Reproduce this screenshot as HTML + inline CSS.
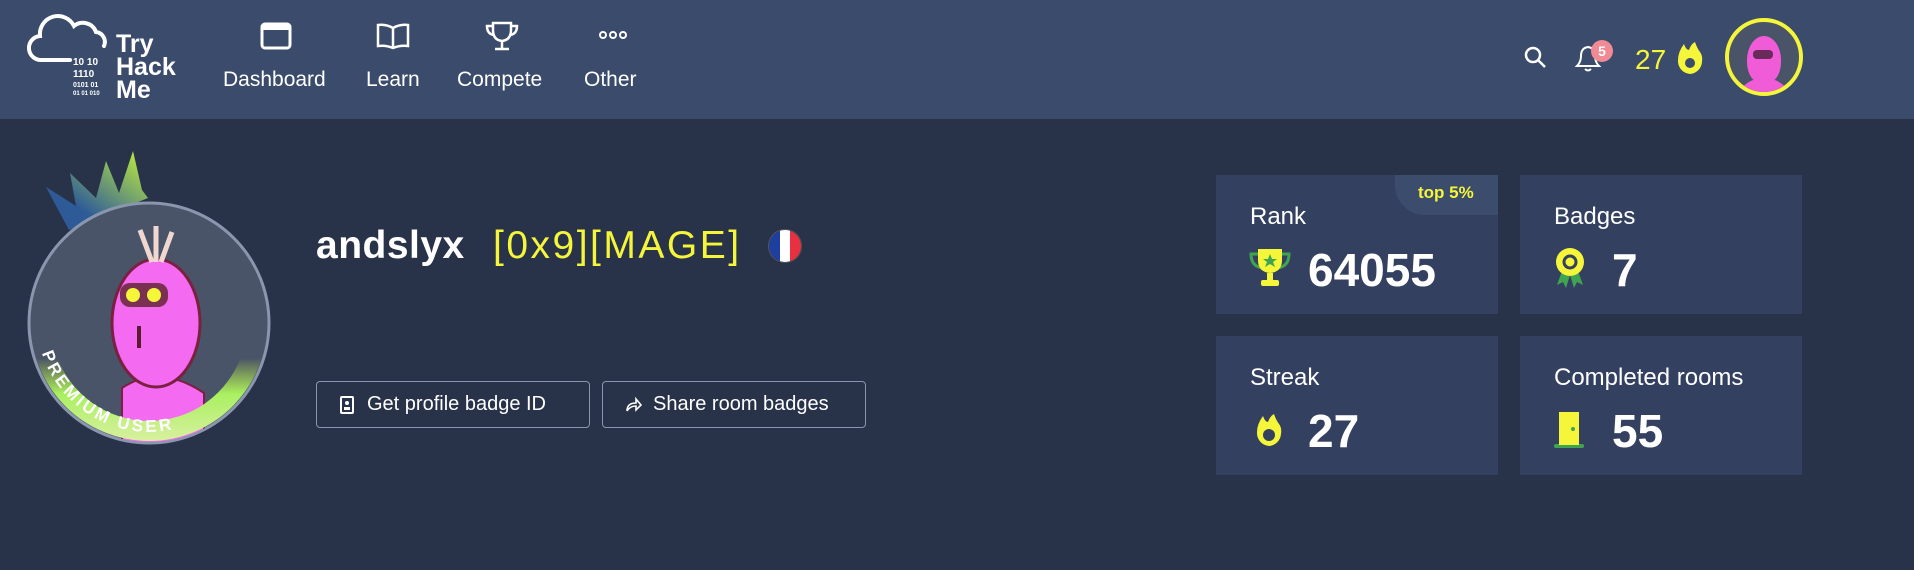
<!DOCTYPE html>
<html><head><meta charset="utf-8"><style>
*{margin:0;padding:0;box-sizing:border-box}
body{width:1914px;height:570px;background:#283349;font-family:"Liberation Sans",sans-serif;color:#fff;position:relative;overflow:hidden}
.hdr{position:absolute;left:0;top:0;width:1914px;height:119px;background:#3a4b6b}
.a{position:absolute}
.nav{position:absolute;top:68px;font-size:21px;color:#fff}
.card{position:absolute;width:282px;height:139px;background:#334060}
.card .t{position:absolute;left:34px;top:28px;font-size:24px}
.card .v{position:absolute;left:92px;top:68px;font-size:46px;font-weight:bold}
.btn{position:absolute;top:381px;height:47px;border:1.5px solid #8a96ad;border-radius:4px;font-size:20px;line-height:44px;padding-left:50px}
</style></head><body>
<div class="hdr"></div>
<!-- logo -->
<svg class="a" style="left:26px;top:12px" width="90" height="90" viewBox="0 0 90 90">
<path d="M44 48 H16 A12 12 0 0 1 14 24 A18 18 0 0 1 48 14 A14 14 0 0 1 70 20 A10 10 0 0 1 78 34" fill="none" stroke="#fff" stroke-width="4" stroke-linecap="round"/>
<text x="47" y="53" font-size="10" font-weight="bold" fill="#fff" font-family="Liberation Sans">10  10</text>
<text x="47" y="65" font-size="10" font-weight="bold" fill="#fff" font-family="Liberation Sans">1110</text>
<text x="47" y="75" font-size="7" font-weight="bold" fill="#fff" font-family="Liberation Sans">0101  01</text>
<text x="47" y="83" font-size="6" font-weight="bold" fill="#fff" font-family="Liberation Sans">01   01 010</text>
</svg>
<div class="a" style="left:116px;top:33px;font-size:25px;font-weight:bold;line-height:23px">Try<br>Hack<br>Me</div>
<!-- nav icons -->
<svg class="a" style="left:260px;top:22px" width="32" height="28"><rect x="2" y="2" width="28" height="24" rx="3" fill="none" stroke="#fff" stroke-width="3"/><rect x="2" y="2" width="28" height="6" fill="#fff"/></svg>
<svg class="a" style="left:376px;top:22px" width="34" height="28"><path d="M17 6 Q10 2 2 3 V24 Q10 23 17 26 Q24 23 32 24 V3 Q24 2 17 6 V26" fill="none" stroke="#fff" stroke-width="2.5"/></svg>
<svg class="a" style="left:485px;top:20px" width="34" height="32"><path d="M8 3 H26 V10 Q26 20 17 21 Q8 20 8 10 Z M8 6 H2 Q2 14 9 15 M26 6 H32 Q32 14 25 15 M17 21 V28 M10 29 H24" fill="none" stroke="#fff" stroke-width="2.5"/></svg>
<svg class="a" style="left:599px;top:30px" width="28" height="10"><circle cx="4" cy="5" r="3" fill="none" stroke="#fff" stroke-width="2"/><circle cx="14" cy="5" r="3" fill="none" stroke="#fff" stroke-width="2"/><circle cx="24" cy="5" r="3" fill="none" stroke="#fff" stroke-width="2"/></svg>
<div class="nav" style="left:223px">Dashboard</div>
<div class="nav" style="left:366px">Learn</div>
<div class="nav" style="left:457px">Compete</div>
<div class="nav" style="left:584px">Other</div>
<!-- right header -->
<svg class="a" style="left:1523px;top:45px" width="24" height="24"><circle cx="10" cy="10" r="7" fill="none" stroke="#fff" stroke-width="2.5"/><path d="M15 15 L22 22" stroke="#fff" stroke-width="2.5"/></svg>
<svg class="a" style="left:1573px;top:42px" width="30" height="32"><path d="M4 24 Q8 20 8 14 Q8 6 15 5 Q22 6 22 14 Q22 20 26 24 Z M12 27 Q15 30 18 27" fill="none" stroke="#fff" stroke-width="2"/></svg>
<div class="a" style="left:1591px;top:40px;width:22px;height:22px;border-radius:50%;background:#f08a94;font-size:14px;font-weight:bold;text-align:center;line-height:22px">5</div>
<div class="a" style="left:1635px;top:44px;font-size:28px;color:#f5f53a">27</div>
<svg class="a" style="left:1675px;top:40px" width="30" height="36" viewBox="0 0 30 36"><path d="M15 34 A13 13 0 0 1 3 20 Q3 12 9 4 Q11 10 14 10 Q16 4 20 2 Q22 8 25 12 Q28 16 27 22 A13 13 0 0 1 15 34 Z" fill="#f5f53a"/><circle cx="15" cy="23" r="5" fill="#3a4b6b"/></svg>
<div class="a" style="left:1725px;top:18px;width:78px;height:78px;border-radius:50%;border:4px solid #f5f53a;background:#4a5468;overflow:hidden">
<div class="a" style="left:18px;top:14px;width:34px;height:48px;border-radius:50% 50% 45% 45%;background:#f05cd8"></div>
<div class="a" style="left:5px;top:56px;width:60px;height:30px;border-radius:30px 30px 0 0;background:#f05cd8"></div>
<div class="a" style="left:24px;top:28px;width:20px;height:9px;border-radius:4px;background:#6a2a5a"></div>
</div>
<!-- profile avatar -->
<svg class="a" style="left:24px;top:148px" width="260" height="300" viewBox="0 0 260 300">
<defs><linearGradient id="g" x1="0" y1="1" x2="1" y2="0"><stop offset="0.3" stop-color="#2e5b98"/><stop offset="1" stop-color="#c6f53a"/></linearGradient>
<linearGradient id="r" x1="0" y1="0" x2="0" y2="1"><stop offset="0.3" stop-color="#c6f53a" stop-opacity="0"/><stop offset="0.6" stop-color="#a9f060"/><stop offset="1" stop-color="#d8f0a0"/></linearGradient>
<clipPath id="cc"><circle cx="125" cy="175" r="119"/></clipPath></defs>
<polygon points="45,82 22,39 52,58 46,25 72,50 82,13 95,45 109,3 118,42 124,50" fill="url(#g)"/>
<circle cx="125" cy="175" r="120" fill="#4a5468" stroke="#8a96ad" stroke-width="3"/>
<g clip-path="url(#cc)">
<path d="M98 240 Q135 215 180 245 L180 300 L98 300 Z" fill="#f46af0" stroke="#7a2040" stroke-width="2"/>
<ellipse cx="132" cy="175" rx="44" ry="64" fill="#f46af0" stroke="#7a2040" stroke-width="3"/>
<rect x="96" y="135" width="48" height="24" rx="10" fill="#7a3050"/>
<circle cx="109" cy="147" r="7" fill="#f5f53a"/><circle cx="130" cy="147" r="7" fill="#f5f53a"/>
<rect x="113" y="178" width="4" height="22" fill="#5a1a30"/>
<path d="M128 114 L116 82 M132 114 L132 78 M137 114 L148 84" stroke="#f0d8d0" stroke-width="5"/>
</g>
<path d="M7 175 A118 118 0 0 0 243 175 L223 175 A98 98 0 0 1 27 175 Z" fill="url(#r)"/>
<text font-size="17" font-weight="bold" fill="#fff" letter-spacing="3" font-family="Liberation Sans"><textPath href="#arc">PREMIUM USER</textPath></text>
<path id="arc" d="M18 205 A112 112 0 0 0 200 255" fill="none"/>
</svg>
<!-- name -->
<div class="a" style="left:316px;top:224px;font-size:39px;font-weight:bold;letter-spacing:0.5px">andslyx</div>
<div class="a" style="left:493px;top:224px;font-size:39px;color:#f5f53a;letter-spacing:2.5px">[0x9][MAGE]</div>
<div class="a" style="left:768px;top:229px;width:34px;height:34px;border-radius:50%;overflow:hidden;display:flex;border:1px solid #555">
<div style="flex:1;background:#1f3fa0"></div><div style="flex:1;background:#fff"></div><div style="flex:1;background:#e83040"></div></div>
<!-- buttons -->
<div class="btn" style="left:316px;width:274px">Get profile badge ID</div>
<svg class="a" style="left:340px;top:396px" width="14" height="18"><rect x="1" y="1" width="12" height="16" rx="1" fill="none" stroke="#fff" stroke-width="2"/><circle cx="7" cy="7" r="2" fill="#fff"/><rect x="4" y="11" width="6" height="3" fill="#fff"/></svg>
<div class="btn" style="left:602px;width:264px;padding-left:50px">Share room badges</div>
<svg class="a" style="left:624px;top:396px" width="18" height="18"><path d="M3 15 Q3 7 12 7 V3 L17 9 L12 14 V10 Q6 10 3 15" fill="none" stroke="#fff" stroke-width="1.6"/></svg>
<!-- cards -->
<div class="card" style="left:1216px;top:175px">
<div class="a" style="left:179px;top:0;width:103px;height:40px;background:#3b4c6d;border-bottom-left-radius:30px"></div>
<div class="a" style="left:202px;top:8px;font-size:17px;font-weight:bold;color:#f5f53a">top 5%</div>
<div class="t">Rank</div><div class="v">64055</div>
<svg class="a" style="left:32px;top:73px" width="44" height="40" viewBox="0 0 44 40"><path d="M10 6 H3 Q3 18 14 20 M34 6 H41 Q41 18 30 20" fill="none" stroke="#3fa452" stroke-width="3"/><path d="M10 1 H34 V12 Q34 24 22 25 Q10 24 10 12 Z" fill="#f5f53a"/><rect x="19" y="25" width="6" height="8" fill="#f5f53a"/><rect x="13" y="32" width="18" height="6" rx="2" fill="#f5f53a"/><path d="M22 6 L24 11 L29 11 L25 14 L27 19 L22 16 L17 19 L19 14 L15 11 L20 11 Z" fill="#3fa452"/></svg>
</div>
<div class="card" style="left:1520px;top:175px"><div class="t">Badges</div><div class="v" style="left:92px">7</div>
<svg class="a" style="left:34px;top:72px" width="32" height="42" viewBox="0 0 32 42"><path d="M8 24 L3 38 L9 35 L12 41 L16 28 L20 41 L23 35 L29 38 L24 24 Z" fill="#3fa452"/><circle cx="16" cy="15" r="14" fill="#f5f53a"/><circle cx="16" cy="15" r="6" fill="none" stroke="#334060" stroke-width="3"/></svg></div>
<div class="card" style="left:1216px;top:336px"><div class="t">Streak</div><div class="v">27</div>
<svg class="a" style="left:38px;top:76px" width="30" height="36" viewBox="0 0 30 36"><path d="M15 34 A13 13 0 0 1 3 20 Q3 12 9 4 Q11 10 14 10 Q16 4 20 2 Q22 8 25 12 Q28 16 27 22 A13 13 0 0 1 15 34 Z" fill="#f5f53a"/><circle cx="15" cy="23" r="6" fill="#334060"/></svg></div>
<div class="card" style="left:1520px;top:336px"><div class="t">Completed rooms</div><div class="v" style="left:92px">55</div>
<svg class="a" style="left:34px;top:76px" width="30" height="36"><rect x="0" y="32" width="30" height="4" rx="2" fill="#3fa452"/><rect x="5" y="0" width="20" height="33" fill="#f5f53a"/><circle cx="19" cy="17" r="2" fill="#3fa452"/></svg></div>
</body></html>
